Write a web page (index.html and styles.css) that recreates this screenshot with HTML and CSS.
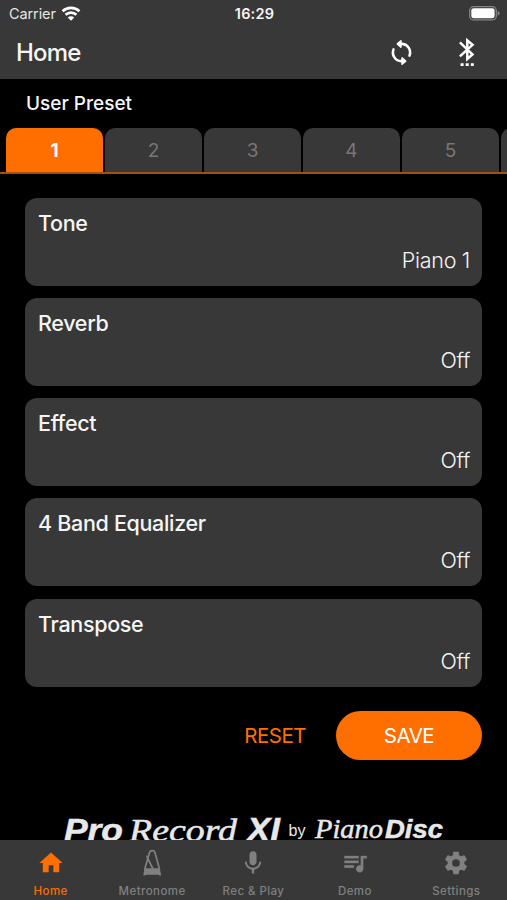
FILE: index.html
```html
<!DOCTYPE html>
<html lang="en">
<head>
<meta charset="utf-8">
<title>Home</title>
<link rel="stylesheet" href="styles.css">
</head>
<body>
<div class="app">
  <header class="header">
    <div class="status">
      <div class="carrier"><span>Carrier</span>
        <svg width="20" height="15" viewBox="0 0 20 15" fill="none" stroke="#fff" stroke-width="2.7"><path d="M1.600 5.200a12.300 12.300 0 0 1 16.800 0M4.600 8.800a7.800 7.800 0 0 1 10.800 0"/><path d="M10 14.700 6.800 11.500a4.600 4.600 0 0 1 6.400 0z" fill="#fff" stroke="none"/></svg>
      </div>
      <div class="time">16:29</div>
      <svg class="battery" width="31" height="15" viewBox="0 0 31 15"><rect x=".7" y=".7" width="26.600" height="13.200" rx="4" fill="none" stroke="#858585" stroke-width="1.300"/><rect x="2.300" y="2.300" width="23.300" height="10" rx="2.300" fill="#fff"/><path d="M28.600 4.800c2.600 1 2.600 4 0 5z" fill="#858585"/></svg>
    </div>
    <div class="bar">
      <h1 class="title">Home</h1>
      <svg class="sync" width="27" height="27" viewBox="0 0 24 24" fill="none" stroke="#fff" stroke-width="2.300" stroke-linecap="round"><path d="M11 4.300h1a7.700 7.700 0 0 1 7.100 10.500M13 19.700h-1A7.700 7.700 0 0 1 4.900 9.200"/><path d="M11.500 1.600v5.600L8.300 4.400zM12.500 16.800v5.600l3.200-2.800z" fill="#fff" stroke-width="1.400" stroke-linejoin="round"/></svg>
      <svg class="bluetooth" width="18" height="32" viewBox="0 0 18 32" fill="none" stroke="#fff" stroke-width="2.500"><path d="M1.900 5.400 14.500 17.400 9.300 22V3.500l5.200 4.300L1.900 19.400"/><path d="M2.600 27.600h3M7.700 27.600h3M12.800 27.600h3" stroke-width="2.600"/></svg>
    </div>
  </header>
  <main class="content">
    <h2 class="preset">User Preset</h2>
    <div class="tabs"><div class="tab active">1</div><div class="tab">2</div><div class="tab">3</div><div class="tab">4</div><div class="tab">5</div><div class="tab"></div></div>
    <div class="cards">
      <section class="card"><div class="name">Tone</div><div class="value">Piano 1</div></section>
      <section class="card"><div class="name">Reverb</div><div class="value">Off</div></section>
      <section class="card"><div class="name">Effect</div><div class="value">Off</div></section>
      <section class="card"><div class="name">4 Band Equalizer</div><div class="value">Off</div></section>
      <section class="card"><div class="name">Transpose</div><div class="value">Off</div></section>
    </div>
    <div class="actions"><button class="reset">RESET</button><button class="save">SAVE</button></div>
    <svg class="brand" width="507" height="30" viewBox="0 0 507 30">
      <text class="sans" x="64" y="30" font-size="31" textLength="59" lengthAdjust="spacingAndGlyphs">Pro</text>
      <text class="serif" x="129" y="30" font-size="32" textLength="108" lengthAdjust="spacingAndGlyphs">Record</text>
      <text class="sans" x="247" y="30" font-size="33" textLength="33" lengthAdjust="spacingAndGlyphs">XI</text>
      <text class="by" x="288.500" y="25" font-size="17" textLength="17" lengthAdjust="spacingAndGlyphs">by</text>
      <text class="serif" x="315" y="27" font-size="28" textLength="68" lengthAdjust="spacingAndGlyphs">Piano</text>
      <text class="sans" x="385" y="26.500" font-size="26" textLength="58" lengthAdjust="spacingAndGlyphs">Disc</text>
    </svg>
  </main>
  <nav class="nav">
    <a class="item current"><svg width="28" height="28" viewBox="0 0 24 24"><path d="M10 20v-6h4v6h5v-8h3L12 3 2 12h3v8z"/></svg><span>Home</span></a>
    <a class="item"><svg width="28" height="28" viewBox="0 0 28 28"><path d="m6.800 20 4.700-16.500q.5-1.800 2.700-1.800t2.700 1.800L21.500 20M8.800 7.500l6 12" fill="none" stroke="currentColor" stroke-width="1.700"/><path d="M6.300 19.300h15.500L23 25v1.500h-2v-.8H7.500v.8h-2V25zM8 6.500l3 .8-1.500 3z"/></svg><span>Metronome</span></a>
    <a class="item"><svg width="28" height="28" viewBox="0 0 24 24"><path d="M12 14c1.660 0 3-1.340 3-3V5a3 3 0 0 0-6 0v6c0 1.660 1.340 3 3 3zm5.300-3c0 3-2.540 5.100-5.300 5.100S6.700 14 6.700 11H5c0 3.410 2.720 6.230 6 6.720V21h2v-3.280c3.280-.48 6-3.300 6-6.720z"/></svg><span>Rec &amp; Play</span></a>
    <a class="item"><svg width="28" height="28" viewBox="0 0 24 24"><path d="M15 6H3v2h12zm0 4H3v2h12zM3 16h8v-2H3zM17 6v8.180A3 3 0 1 0 19 17V8h3V6z" stroke="currentColor" stroke-width=".3"/></svg><span>Demo</span></a>
    <a class="item"><svg width="30" height="30" viewBox="0 0 24 24"><path d="M19.140 12.940c.04-.3.060-.61.060-.94s-.02-.64-.07-.94l2.030-1.580a.49.49 0 0 0 .12-.61l-1.920-3.320a.49.49 0 0 0-.59-.22l-2.390.96a7 7 0 0 0-1.620-.94l-.36-2.540a.48.48 0 0 0-.48-.41h-3.840a.47.47 0 0 0-.47.41l-.36 2.540a7.300 7.300 0 0 0-1.620.94l-2.390-.96a.47.47 0 0 0-.59.22L2.740 8.870a.47.47 0 0 0 .12.610l2.030 1.580a6 6 0 0 0 0 1.880l-2.030 1.580a.49.49 0 0 0-.12.610l1.920 3.320c.12.220.37.290.59.220l2.390-.96c.5.380 1.030.7 1.620.94l.36 2.540c.05.240.24.410.48.410h3.840c.24 0 .44-.17.470-.41l.36-2.540a7 7 0 0 0 1.620-.94l2.390.96c.22.080.47 0 .59-.22l1.920-3.320a.47.47 0 0 0-.12-.61zM12 15.300a3.300 3.300 0 1 1 0-6.600 3.300 3.300 0 0 1 0 6.600z"/></svg><span>Settings</span></a>
  </nav>
</div>
</body>
</html>
```
FILE: styles.css
```css
* { box-sizing: border-box; }
body { margin: 0; background: #000; color: #f5f5f5; font-family: Inter, "Liberation Sans", sans-serif; }
.app { width: 507px; height: 900px; display: flex; flex-direction: column; overflow: hidden; }
.header { height: 79px; flex: none; background: #383838; }
.status { height: 27px; display: grid; grid-template-columns: 1fr 1fr 1fr; align-items: center; padding: 0 7px 0 9px; }
.carrier { display: flex; align-items: center; gap: 6px; font-size: 14.500px; letter-spacing: -.1px; color: #e5e5e5; }
.carrier svg { margin: -1px 0 0 -1px; }
.time { text-align: center; font-size: 14.500px; font-weight: 600; letter-spacing: .2px; }
.battery { justify-self: end; }
.bar { height: 52px; display: flex; align-items: center; padding: 0 31px 0 16px; }
.title { margin: 0; flex: 1; font-size: 24px; line-height: 50px; font-weight: 500; letter-spacing: -.8px; }
.sync { margin: -2px 43px 0 0; }
.content { flex: 1; min-height: 0; overflow: hidden; }
.preset { margin: 0; padding-left: 26px; height: 49px; line-height: 50px; font-size: 19px; font-weight: 500; letter-spacing: 0; }
.tabs { display: flex; gap: 2px; height: 46px; padding-left: 6px; border-bottom: 2px solid #a3500b; overflow: hidden; }
.tab { flex: none; width: 97px; height: 44px; border-radius: 10px 10px 0 0; background: #383838; color: #777; text-align: center; font-size: 19px; line-height: 45px; }
.tab.active { background: #ff6f00; color: #fff; font-weight: 700; }
.cards { display: flex; flex-direction: column; gap: 12.250px; padding: 23.500px 25px 0; }
.card { height: 88px; border-radius: 12px; background: #383838; padding: 11px 12px 0 13px; font-size: 21.500px; line-height: 28px; }
.name { font-weight: 500; letter-spacing: -.32px; }
.value { margin-top: 9px; text-align: right; font-weight: 300; letter-spacing: -.3px; }
.actions { display: flex; justify-content: flex-end; align-items: center; height: 49px; margin: 24px 25px 0; gap: 30px; }
.actions button { font: 400 20.500px/26px Inter, "Liberation Sans", sans-serif; border: 0; padding: 1px 0 0; letter-spacing: -.5px; }
.actions .reset { color: #ff6f00; background: none; }
.actions .save { width: 146px; height: 49px; border-radius: 25px; color: #fff; background: #ff6f00; }
.brand { display: block; margin-top: 51px; overflow: visible; fill: #e8e8e8; }
.sans { font-family: "Liberation Sans", sans-serif; font-weight: 700; font-style: italic; stroke: #e8e8e8; stroke-width: .5px; }
.serif { font-family: "Liberation Serif", serif; font-style: italic; stroke: #e8e8e8; stroke-width: .5px; }
.by { font-family: "Liberation Sans", sans-serif; }
.nav { height: 60px; flex: none; display: grid; grid-template-columns: repeat(5, 1fr); background: #383838; }
.item { display: flex; flex-direction: column; align-items: center; padding-top: 9px; color: #808080; font-size: 11.500px; font-weight: 500; letter-spacing: .42px; }
.item svg { flex: none; height: 28px; fill: currentColor; }
.item span { margin-top: 7px; line-height: 14px; }
.item.current { color: #ff6f00; }
```
